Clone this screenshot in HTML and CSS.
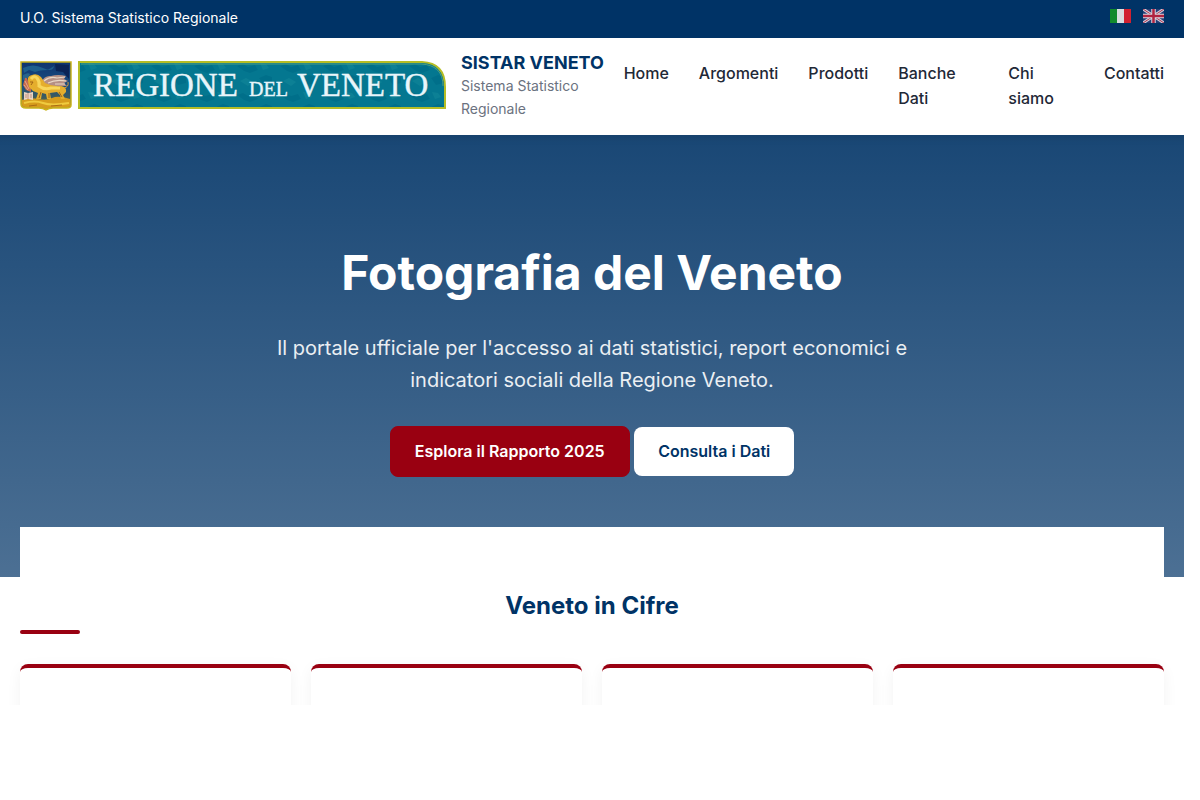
FILE: index.html
```html
<!DOCTYPE html>
<html lang="it">
<head>
    <meta charset="UTF-8">
    <meta name="viewport" content="width=device-width, initial-scale=1.0">
    <title>SISTAR Veneto</title>
    <link rel="stylesheet" href="styles.css">
</head>
<body>
<div class="top-bar">
    <div class="container top-bar-inner">
        <span>U.O. Sistema Statistico Regionale</span>
        <div class="languages">
            <a href="#it" aria-label="Italiano">
                <svg class="flag" viewBox="0 0 21 14">
                    <rect width="21" height="14" fill="#f1f1ee"/>
                    <rect width="7" height="14" fill="#159427"/>
                    <rect x="14" width="7" height="14" fill="#e8202b"/>
                </svg>
            </a>
            <a href="#en" aria-label="English">
                <svg class="flag" viewBox="0 0 21 14">
                    <rect width="21" height="14" fill="#293f78"/>
                    <path d="M0 0L21 14M21 0L0 14" stroke="#e8dfe6" stroke-width="3"/>
                    <path d="M0 0L21 14M21 0L0 14" stroke="#c4324a" stroke-width="1"/>
                    <path d="M10.5 0V14M0 7H21" stroke="#f0e8ec" stroke-width="4.5"/>
                    <path d="M10.5 0V14M0 7H21" stroke="#c4223c" stroke-width="2.5"/>
                </svg>
            </a>
        </div>
    </div>
</div>

<header class="header">
    <div class="container header-inner">
        <a class="brand" href="#home">
            <svg class="logo" viewBox="0 0 426 50" role="img" aria-label="Regione del Veneto">
                <defs>
                    <linearGradient id="sky" x1="0" y1="0" x2="0" y2="1">
                        <stop offset="0" stop-color="#0f3470"/>
                        <stop offset=".5" stop-color="#1b4f80"/>
                        <stop offset=".75" stop-color="#3f5c5c"/>
                        <stop offset="1" stop-color="#d9a11f"/>
                    </linearGradient>
                    <pattern id="teal" width="43" height="29" patternUnits="userSpaceOnUse">
                        <rect width="43" height="29" fill="#047790"/>
                        <path d="M2 5l6-2 5 3 7-2 3 5-8 3-6-2zM24 17l7-3 6 2v6l-8 2z" fill="#006f8a"/>
                        <path d="M25 2l6 1 3 4-6 2zM5 20l6-3 7 4-5 4z" fill="#0c8095"/>
                    </pattern>
                </defs>
                <!-- crest -->
                <path d="M1 1H51V44Q51 47 47 47H33Q29 47 26 49Q23 47 19 47H6Q1 47 1 43Z" fill="url(#sky)"/>
                <path d="M3 7Q13 2 23 7T34 5L28 9Q20 9 15 11L9 9L4 12Z" fill="#1f5f8d"/>
                <path d="M35 3L49 4V18L43 11L36 10Z" fill="#0b2456"/>
                <path d="M3 14Q8 11 10 13L8 17L3 19Z" fill="#28648b"/>
                <path d="M2 39Q10 36 18 38T32 37T50 38V44Q50 46 46 46H33Q29 46 26 48Q23 46 19 46H6Q2 46 2 43Z" fill="#d69c1c"/>
                <path d="M4 42Q15 39 23 42T49 42" fill="none" stroke="#efca3e" stroke-width="2"/>
                <path d="M9 45L17 44M31 45L42 44" stroke="#a96c14" stroke-width="1"/>
                <!-- wings -->
                <path d="M21 21Q25 14 31 15Q38 13 46 15L44 18L48 20L44 22L47 25L34 25L27 25Z" fill="#b58f85"/>
                <path d="M24 20Q30 15 37 17L45 16M28 22Q36 18 46 20M35 23L45 23" fill="none" stroke="#ead8c6" stroke-width="1.2"/>
                <path d="M5 17Q7 16 8 20L11 25L11 31L6 29L3 24Z" fill="#c9694c"/>
                <path d="M5 20L9 28M4 24L8 29" stroke="#e3ab8b" stroke-width="1"/>
                <!-- lion -->
                <path d="M8 20Q7 15 12 14Q17 12 21 16L25 22Q33 26 41 25Q47 26 46 31L43 34L45 38H41L40 34L37 31L30 32L31 38H27L26 33L22 32L21 38H16L18 32L13 30L9 26Z" fill="#e5ae2d"/>
                <path d="M11 18Q14 14 17 17Q20 21 19 25Q24 29 31 27H40" fill="none" stroke="#f8d65b" stroke-width="3"/>
                <path d="M10 21L13 21L11 24M21 31L19 37M29 32V37M39 31L42 36" fill="none" stroke="#a16416" stroke-width="1"/>
                <path d="M44 27Q49 26 48 21" fill="none" stroke="#d99a37" stroke-width="1"/>
                <!-- open book -->
                <path d="M4 31L8 32L13 31V39L8 38L4 39Z" fill="#ead5c4"/>
                <path d="M8 32V38M6 33V37M11 33V37" stroke="#b27566" stroke-width=".7"/>
                <path d="M1 1H51V44Q51 47 47 47H33Q29 47 26 49Q23 47 19 47H6Q1 47 1 43Z" fill="none" stroke="#c9b41c" stroke-width="1.5"/>
                <!-- name plate -->
                <path d="M59 1H402Q425 2 425 26V47H59Z" fill="url(#teal)" stroke="#b5bd25" stroke-width="2"/>
                <path d="M61 3H401Q423 4 423 25" fill="none" stroke="#4c9c81" stroke-width="1"/>
                <g class="logo-text">
                    <text x="73" y="35">REGIONE</text>
                    <text class="logo-text-small" x="229" y="35">DEL</text>
                    <text x="277" y="35">VENETO</text>
                </g>
            </svg>
            <span class="brand-text">
                <strong class="brand-name">SISTAR VENETO</strong>
                <span class="brand-subtitle">Sistema Statistico Regionale</span>
            </span>
        </a>
        <nav>
            <ul class="nav-list">
                <li><a href="#home">Home</a></li>
                <li><a href="#argomenti">Argomenti</a></li>
                <li><a href="#prodotti">Prodotti</a></li>
                <li><a href="#banche-dati">Banche Dati</a></li>
                <li><a href="#chi-siamo">Chi siamo</a></li>
                <li><a href="#contatti">Contatti</a></li>
            </ul>
        </nav>
    </div>
</header>

<section class="hero">
    <div class="container">
        <h1>Fotografia del Veneto</h1>
        <p>Il portale ufficiale per l'accesso ai dati statistici, report economici e indicatori sociali della Regione Veneto.</p>
        <a class="btn btn-primary" href="#rapporto">Esplora il Rapporto 2025</a>
        <a class="btn btn-light" href="#banche-dati">Consulta i Dati</a>
    </div>
</section>

<main class="container">
    <section class="stats">
        <h2>Veneto in Cifre</h2>
        <div class="stats-grid">
            <div class="stat-card"></div>
            <div class="stat-card"></div>
            <div class="stat-card"></div>
            <div class="stat-card"></div>
        </div>
    </section>
</main>
</body>
</html>
```
FILE: styles.css
```css
:root {
    --primary: #003366;
    --accent: #990011;
    --text: #1f2937;
    --muted: #6b7280;
}
* {
    box-sizing: border-box;
    margin: 0;
    padding: 0;
}
html {
    background: white;
    padding-right: 16px;
}
body {
    font-family: Inter, sans-serif;
    font-size: 16px;
    line-height: 25px;
    color: var(--text);
}
a {
    color: inherit;
    text-decoration: none;
}
.container {
    max-width: 1200px;
    margin: 0 auto;
    padding: 0 20px;
}
.top-bar {
    background: var(--primary);
    color: white;
    font-size: 14px;
    line-height: 22px;
    padding: 7px 0 9px;
}
.top-bar-inner {
    display: flex;
    justify-content: space-between;
}
.languages {
    display: flex;
    gap: 12px;
}
.flag {
    display: block;
    width: 21px;
    height: 14px;
    margin-top: 2px;
    opacity: 0.9;
}
.header {
    background: white;
    padding: 14px 0 15px;
}
.header-inner {
    display: flex;
    justify-content: space-between;
    align-items: center;
}
.brand {
    display: flex;
    align-items: center;
    gap: 15px;
}
.logo {
    flex-shrink: 0;
    width: 426px;
    height: 50px;
}
.logo-text {
    font-family: "Liberation Serif", serif;
    font-size: 33px;
    fill: #e8f5fa;
    stroke: #e8f5fa;
    stroke-width: 0.4;
}
.logo-text-small {
    font-size: 20px;
}
.brand-name {
    display: block;
    font-size: 18px;
    line-height: 22px;
    font-weight: 700;
    color: var(--primary);
}
.brand-subtitle {
    display: block;
    font-size: 14px;
    line-height: 23px;
    color: var(--muted);
}
.nav-list {
    display: flex;
    gap: 30px;
    list-style: none;
    font-weight: 500;
}
.hero {
    background: linear-gradient(rgba(0, 51, 102, 0.9), rgba(0, 51, 102, 0.7));
    box-shadow: inset 0 10px 8px -8px rgba(0, 0, 0, 0.1);
    color: white;
    text-align: center;
    padding: 100px 0;
}
.hero h1 {
    font-size: 48px;
    line-height: 75px;
    font-weight: 700;
    margin-bottom: 22px;
}
.hero p {
    max-width: 700px;
    margin: 0 auto 30px;
    font-size: 20px;
    line-height: 32px;
    opacity: 0.9;
}
.btn {
    display: inline-block;
    padding: 12px 24px;
    border-radius: 8px;
    font-weight: 600;
}
.btn-primary {
    background: var(--accent);
    border: 1px solid var(--accent);
    color: white;
}
.btn-light {
    background: white;
    color: var(--primary);
}
.stats {
    position: relative;
    margin-top: -50px;
    padding-top: 60px;
    background: white;
}
.stats h2 {
    font-size: 24px;
    line-height: 38px;
    font-weight: 700;
    text-align: center;
    color: var(--primary);
}
.stats h2::after {
    content: "";
    display: block;
    width: 60px;
    height: 4px;
    margin-top: 5px;
    border-radius: 2px;
    background: var(--accent);
}
.stats-grid {
    display: grid;
    grid-template-columns: repeat(4, 1fr);
    gap: 20px;
    margin: 10px -20px 0;
    padding: 20px 20px 0;
    overflow: hidden;
}
.stat-card {
    height: 60px;
    margin-bottom: -19px;
    background: white;
    border-top: 4px solid var(--accent);
    border-radius: 8px;
    box-shadow: 0 4px 15px rgba(0, 0, 0, 0.05);
}
```
